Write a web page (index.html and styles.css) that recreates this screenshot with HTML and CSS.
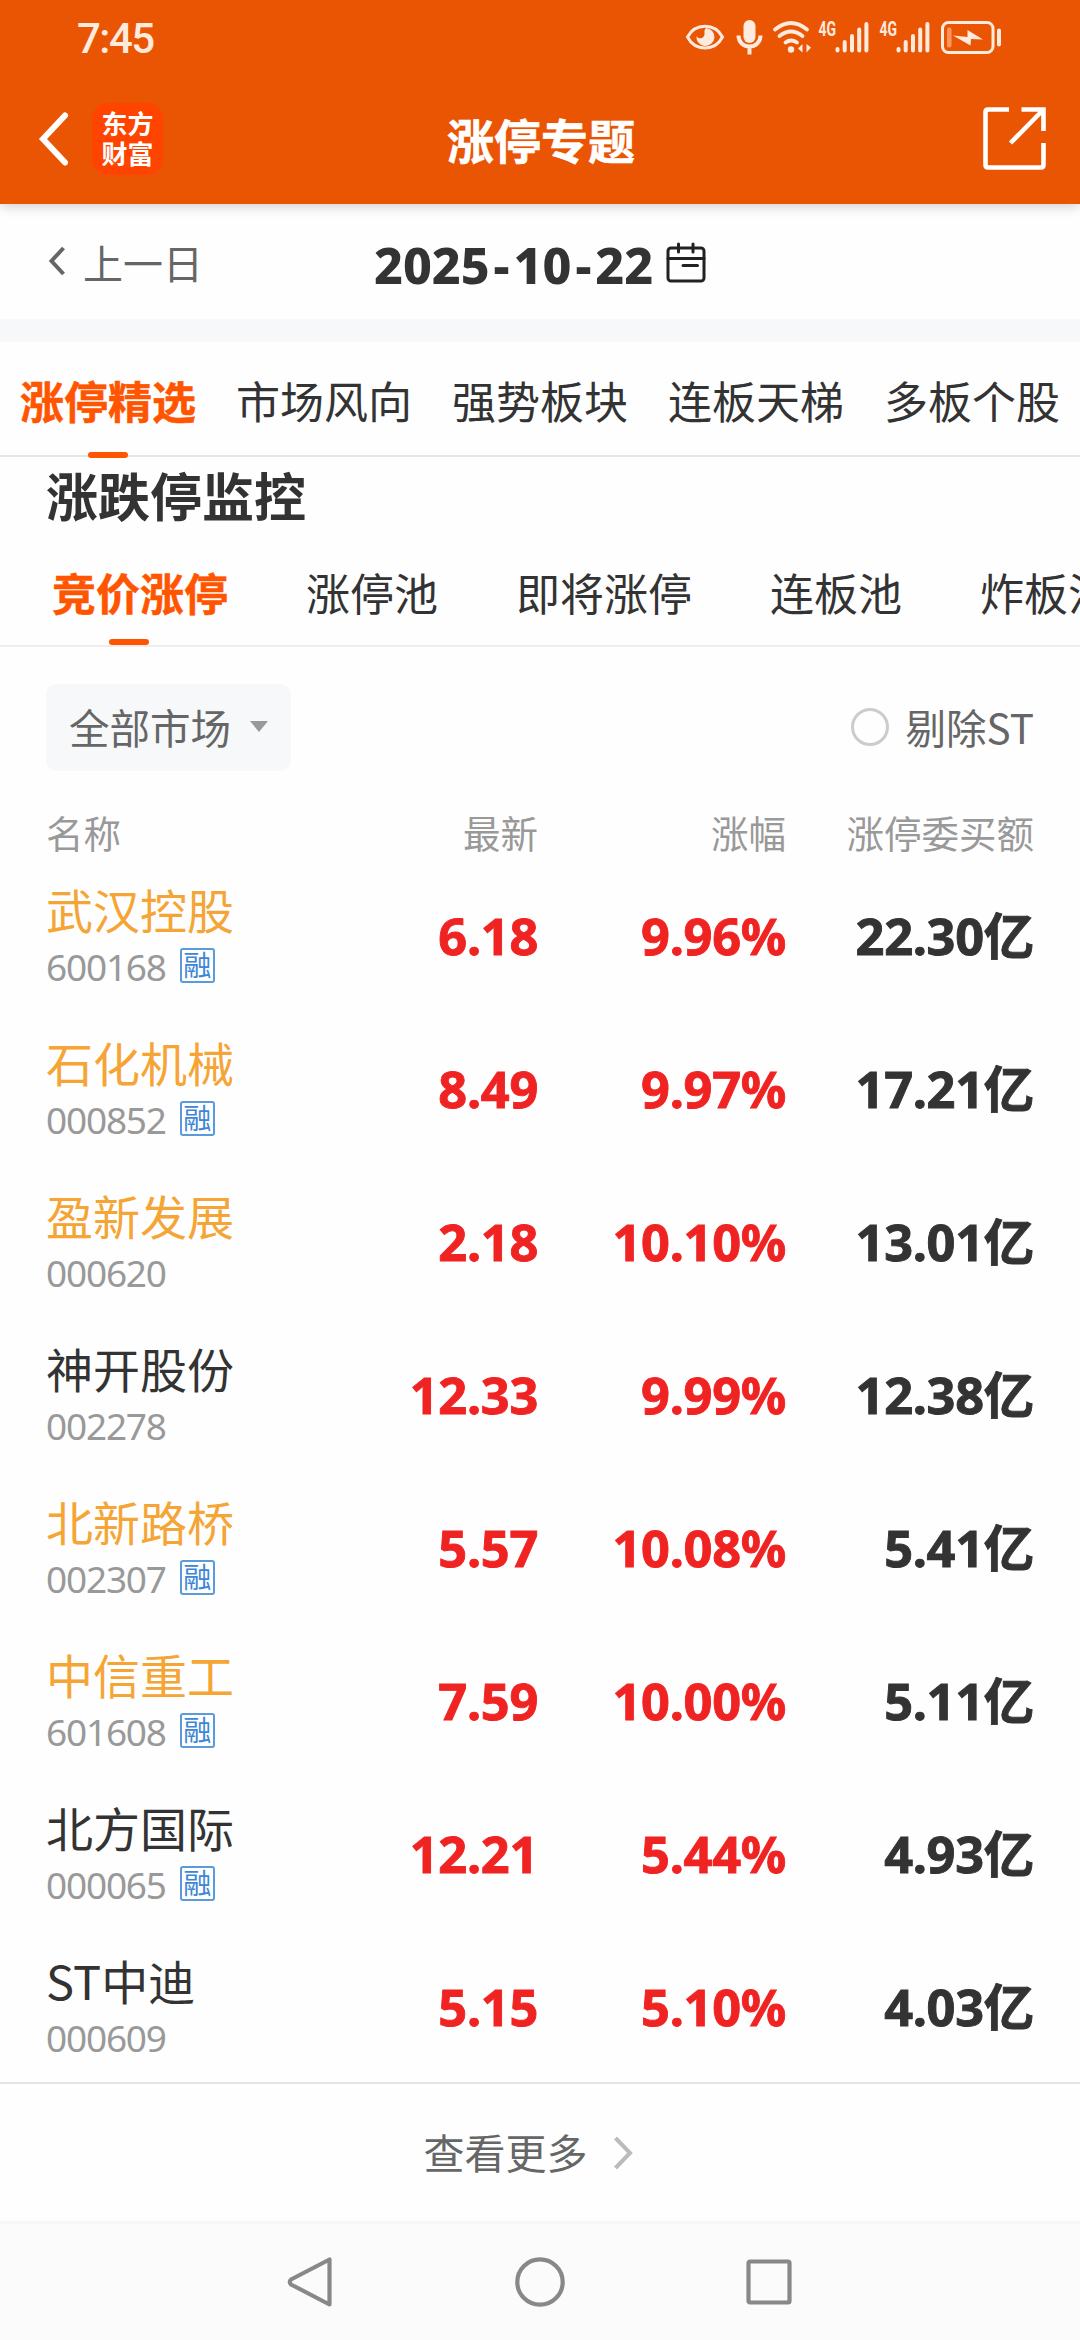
FILE: index.html
```html
<!DOCTYPE html>
<html lang="zh-CN">
<head>
  <meta charset="UTF-8" />
  <meta name="viewport" content="width=device-width, initial-scale=1.0"/>
  <title>涨停专题</title>
  <link rel="stylesheet" href="styles.css">
</head>
<body>

<header>
  <!-- Status bar -->
  <div class="status-bar">
    <span class="time">7:45</span>
    <svg class="status-icons" width="316" height="36" viewBox="686 18 316 36" fill="none" stroke="#ffeade">
      <path d="M687.500 36C695 21.500 715 21.500 722.500 36C715 50.500 695 50.500 687.500 36Z" stroke-width="3"/>
      <path d="M706 27a9 9 0 1 1-9.500 8c2 4 8.500 2.500 8-2.500c0-2-.5-3.500 1.500-5.500Z" fill="#ffeade" stroke="none"/>
      <rect x="743.500" y="19" width="12" height="23" rx="6" fill="#ffeade" stroke="none"/>
      <path d="M738.500 34.500c0 14.500 22 14.500 22 0M749.500 45v8.500" stroke-width="4"/>
      <path d="M775 28.500Q791 15.500 807 28.500M779.500 35Q791 26 802.500 35M785.500 41.500Q791 37.500 797 41.500" stroke-width="3.800" stroke-linecap="round"/>
      <circle cx="791" cy="48.500" r="3.200" fill="#ffeade" stroke="none"/>
      <path d="M802.500 43v8.500l-4.500-4zM806.500 43v8.500l4.500-5z" fill="#ffeade" stroke="none"/>
      <g id="signal">
        <text x="818.500" y="35" font-size="20" textLength="17.500" lengthAdjust="spacingAndGlyphs" class="net">4G</text>
        <path d="M837.500 48v1.500M844.700 41v8.500M852 35v14.500M859.200 28.500v21M866.400 23v26.500" stroke-width="4" stroke-linecap="round"/>
      </g>
      <use href="#signal" x="61"/>
      <rect x="942.500" y="21.500" width="50.500" height="30" rx="6" stroke-width="3"/>
      <rect x="947" y="26.500" width="4.500" height="20" rx="2" fill="#ff9560" stroke="none"/>
      <path d="M999 29.500v14" stroke-width="4" stroke-linecap="round"/>
      <path d="M953 34.500l14.500 1.500V29L983 38.500l-12-.5-.5 6.500z" fill="#ffeade" stroke="none"/>
    </svg>
  </div>

  <div class="nav-bar">
    <svg class="back" width="32" height="56" viewBox="0 0 32 56"><path d="M26 4.500L4 28l22 23.500" fill="none" stroke="#fff" stroke-width="6" stroke-linecap="round"/></svg>
    <div class="logo">东方<br>财富</div>
    <h1>涨停专题</h1>
    <svg class="share" width="64" height="64" viewBox="0 0 64 64" fill="none" stroke="#fff" stroke-width="4.600">
      <path d="M26 2.500H5Q2.500 2.500 2.500 5V58q0 2.500 2.500 2.500H58q2.500 0 2.500-2.500V36M38.500 2.500H60.500V24M60 3L27.500 36"/>
    </svg>
  </div>
</header>

<!-- Date -->
<div class="date-bar">
  <div class="prev">
    <svg width="18" height="30" viewBox="0 0 18 30"><path d="M15.500 2L3.500 15l12 13" fill="none" stroke="#666" stroke-width="4"/></svg>
    <span>上一日</span>
  </div>
  <div class="date">
    <span>2025<i>-</i>10<i>-</i>22</span>
    <svg width="40" height="40" viewBox="0 0 40 40" fill="none" stroke="#222" stroke-width="3">
      <rect x="2" y="5" width="36" height="33" rx="3"/>
      <path d="M2 15.500H38M12.500 1V9M27 1V9M17 22.500H31.500" stroke-linecap="round"/>
    </svg>
  </div>
</div>

<nav class="tabs">
  <a class="active">涨停精选</a>
  <a>市场风向</a>
  <a>强势板块</a>
  <a>连板天梯</a>
  <a>多板个股</a>
</nav>

<main>
  <h2>涨跌停监控</h2>

  <nav class="sub-tabs">
    <a class="active">竞价涨停</a>
    <a>涨停池</a>
    <a>即将涨停</a>
    <a>连板池</a>
    <a>炸板池</a>
  </nav>

  <div class="filters">
    <div class="select"><span>全部市场</span><i></i></div>
    <label class="radio"><i></i><span>剔除ST</span></label>
  </div>

  <!-- Stock list -->
  <div class="row head">
    <span>名称</span><span>最新</span><span>涨幅</span><span>涨停委买额</span>
  </div>
  <div class="row">
    <div class="stock hot"><b>武汉控股</b><p>600168 <em>融</em></p></div>
    <span class="red">6.18</span><span class="red">9.96%</span><span>22.30亿</span>
  </div>
  <div class="row">
    <div class="stock hot"><b>石化机械</b><p>000852 <em>融</em></p></div>
    <span class="red">8.49</span><span class="red">9.97%</span><span>17.21亿</span>
  </div>
  <div class="row">
    <div class="stock hot"><b>盈新发展</b><p>000620</p></div>
    <span class="red">2.18</span><span class="red">10.10%</span><span>13.01亿</span>
  </div>
  <div class="row">
    <div class="stock"><b>神开股份</b><p>002278</p></div>
    <span class="red">12.33</span><span class="red">9.99%</span><span>12.38亿</span>
  </div>
  <div class="row">
    <div class="stock hot"><b>北新路桥</b><p>002307 <em>融</em></p></div>
    <span class="red">5.57</span><span class="red">10.08%</span><span>5.41亿</span>
  </div>
  <div class="row">
    <div class="stock hot"><b>中信重工</b><p>601608 <em>融</em></p></div>
    <span class="red">7.59</span><span class="red">10.00%</span><span>5.11亿</span>
  </div>
  <div class="row">
    <div class="stock"><b>北方国际</b><p>000065 <em>融</em></p></div>
    <span class="red">12.21</span><span class="red">5.44%</span><span>4.93亿</span>
  </div>
  <div class="row">
    <div class="stock"><b>ST中迪</b><p>000609</p></div>
    <span class="red">5.15</span><span class="red">5.10%</span><span>4.03亿</span>
  </div>

  <div class="more">
    <span>查看更多</span>
    <svg width="20" height="34" viewBox="0 0 20 34"><path d="M2.500 2L17 17L2.500 32" fill="none" stroke="#bbb" stroke-width="4"/></svg>
  </div>
</main>

<!-- System navigation -->
<footer>
  <svg width="50" height="56" viewBox="0 0 50 56"><path d="M43.500 5.500V50.500L5 30.500Q2.500 28 5 25.500Z" fill="none" stroke="#888" stroke-width="4.200" stroke-linejoin="round"/></svg>
  <svg width="50" height="56" viewBox="0 0 50 56"><circle cx="25" cy="28" r="22.700" fill="none" stroke="#888" stroke-width="4.200"/></svg>
  <svg width="50" height="56" viewBox="0 0 50 56"><rect x="4.500" y="7.500" width="41" height="41" rx="1.500" fill="none" stroke="#888" stroke-width="4.200"/></svg>
</footer>

</body>
</html>
```

FILE: styles.css
```css
* { box-sizing: border-box; }

body {
  margin: 0;
  width: 1080px;
  height: 2340px;
  overflow: hidden;
  font-family: "Noto Sans CJK SC", sans-serif;
  color: #333;
  background: #fefefe;
}

svg {
  display: block;
  flex: none;
  overflow: visible;
}

header {
  height: 204px;
  background: #ea5504;
  color: #fff;
  box-shadow: 0 2px 12px rgba(0, 0, 0, 0.2);
}

.status-bar {
  display: flex;
  justify-content: space-between;
  align-items: center;
  height: 73px;
  padding: 0 78px 0 77px;
}

.time {
  font-family: Roboto, sans-serif;
  font-size: 42px;
  font-weight: 500;
  letter-spacing: -1.5px;
  color: #ffeade;
  line-height: 72px;
  padding-top: 4px;
}

.net {
  font-family: Roboto, sans-serif;
  font-weight: 700;
  fill: #ffeade;
  stroke: none;
}

.nav-bar {
  display: flex;
  align-items: center;
  height: 132px;
  padding: 0 33px 0 39px;
}

.back {
  margin-right: 21px;
}

.logo {
  width: 71px;
  height: 72px;
  padding-top: 5px;
  border-radius: 16px;
  background: #ff4400;
  font-size: 26px;
  font-weight: 700;
  line-height: 30px;
  text-align: center;
}

h1 {
  flex: 1;
  margin: 0 0 0 52px;
  text-align: center;
  font-size: 47px;
  line-height: 60px;
  font-weight: 700;
  -webkit-text-stroke: 0.6px;
}

.share {
  margin-left: 116px;
}

.date-bar {
  display: grid;
  grid-template-columns: 374px 1fr;
  align-items: center;
  height: 138px;
  border-bottom: 23px solid #f7f8fa;
}

.prev {
  display: flex;
  align-items: center;
  gap: 17px;
  padding: 0 0 0 48px;
  font-size: 40px;
  line-height: 60px;
  color: #666;
}

.prev svg {
  margin-bottom: 2px;
}

.date {
  display: flex;
  align-items: center;
  gap: 13px;
  padding-top: 2px;
  font-family: "Noto Sans", "Noto Sans CJK SC", sans-serif;
  font-size: 50px;
  font-weight: 800;
  line-height: 60px;
}

.date span {
  padding-top: 4px;
}

.date i {
  padding: 0 4px;
  font-style: normal;
}

.tabs {
  display: grid;
  grid-template-columns: repeat(5, 216px);
  height: 115px;
  border-bottom: 2px solid #e6e6e6;
  font-size: 44px;
  line-height: 116px;
  text-align: center;
}

.active {
  position: relative;
  font-weight: 700;
  color: #ff5500;
  -webkit-text-stroke: 0.5px;
}

.active::after {
  content: "";
  position: absolute;
  left: 50%;
  bottom: 0;
  width: 40px;
  height: 6px;
  margin-left: -20px;
  border-radius: 3px;
  background: #ff5500;
}

h2 {
  margin: 0;
  padding: 8px 46px 0;
  height: 85px;
  font-size: 52px;
  line-height: 60px;
}

.sub-tabs {
  display: flex;
  gap: 78px;
  height: 105px;
  padding-left: 52px;
  overflow: hidden;
  border-bottom: 2px solid #eee;
  font-size: 44px;
  line-height: 101px;
  white-space: nowrap;
}

.sub-tabs .active::after {
  left: 77px;
}

.filters {
  display: flex;
  justify-content: space-between;
  align-items: center;
  height: 161px;
  padding: 0 46px;
  font-size: 40.5px;
  line-height: 60px;
  color: #666;
}

.filters span {
  margin-bottom: 2px;
}

.select {
  display: flex;
  align-items: center;
  gap: 19px;
  width: 245px;
  height: 87px;
  padding-left: 23px;
  border-radius: 11px;
  background: #f7f8fa;
}

.select i {
  margin-bottom: 2px;
  border: 9px solid transparent;
  border-top: 11px solid #999;
  border-bottom: 0;
}

.radio {
  display: flex;
  align-items: center;
  gap: 16px;
}

.radio i {
  width: 38px;
  height: 38px;
  margin-bottom: 2px;
  border: 3px solid #ccc;
  border-radius: 50%;
}

.row {
  display: grid;
  grid-template-columns: 292px 200px 248px 248px;
  align-items: center;
  height: 153px;
  padding-left: 46px;
  font-family: "Noto Sans", "Noto Sans CJK SC", sans-serif;
  font-size: 50.5px;
  font-weight: 700;
  line-height: 60px;
}

.row > span {
  padding-top: 3px;
  text-align: right;
  letter-spacing: -0.3px;
  -webkit-text-stroke: 0.9px;
}

.row.head {
  height: 50px;
  padding-bottom: 4px;
  font-size: 37.5px;
  font-weight: 400;
  line-height: 46px;
  color: #999;
}

.row.head span {
  letter-spacing: 0;
  -webkit-text-stroke: 0;
}

.row.head span:first-child {
  text-align: left;
}

.red {
  color: #f02323;
}

.stock {
  padding-top: 2px;
}

.stock b {
  display: block;
  font-family: "Noto Sans CJK SC", sans-serif;
  font-size: 47px;
  font-weight: 400;
  line-height: 60px;
}

.stock.hot b {
  color: #f5a535;
}

.stock p {
  display: flex;
  align-items: center;
  gap: 14px;
  height: 54px;
  margin: 0;
  padding-top: 2px;
  font-size: 37px;
  font-weight: 400;
  letter-spacing: -1.2px;
  color: #999;
}

.stock em {
  width: 35px;
  height: 35px;
  margin-bottom: 2px;
  border: 2px solid #5b9bdc;
  border-radius: 3px;
  font-size: 28px;
  font-style: normal;
  line-height: 30px;
  letter-spacing: 0;
  text-align: center;
  color: #3d86d6;
}

.more {
  display: flex;
  justify-content: center;
  align-items: center;
  gap: 25px;
  height: 139px;
  padding-right: 24px;
  border-top: 2px solid #e4e4e4;
  font-size: 41px;
  line-height: 60px;
  color: #666;
}

.more span {
  margin-bottom: 4px;
}

footer {
  display: flex;
  justify-content: center;
  align-items: center;
  gap: 179px;
  height: 119px;
  background: #fbfbfb;
  border-top: 3px solid #f7f7f7;
}
```
